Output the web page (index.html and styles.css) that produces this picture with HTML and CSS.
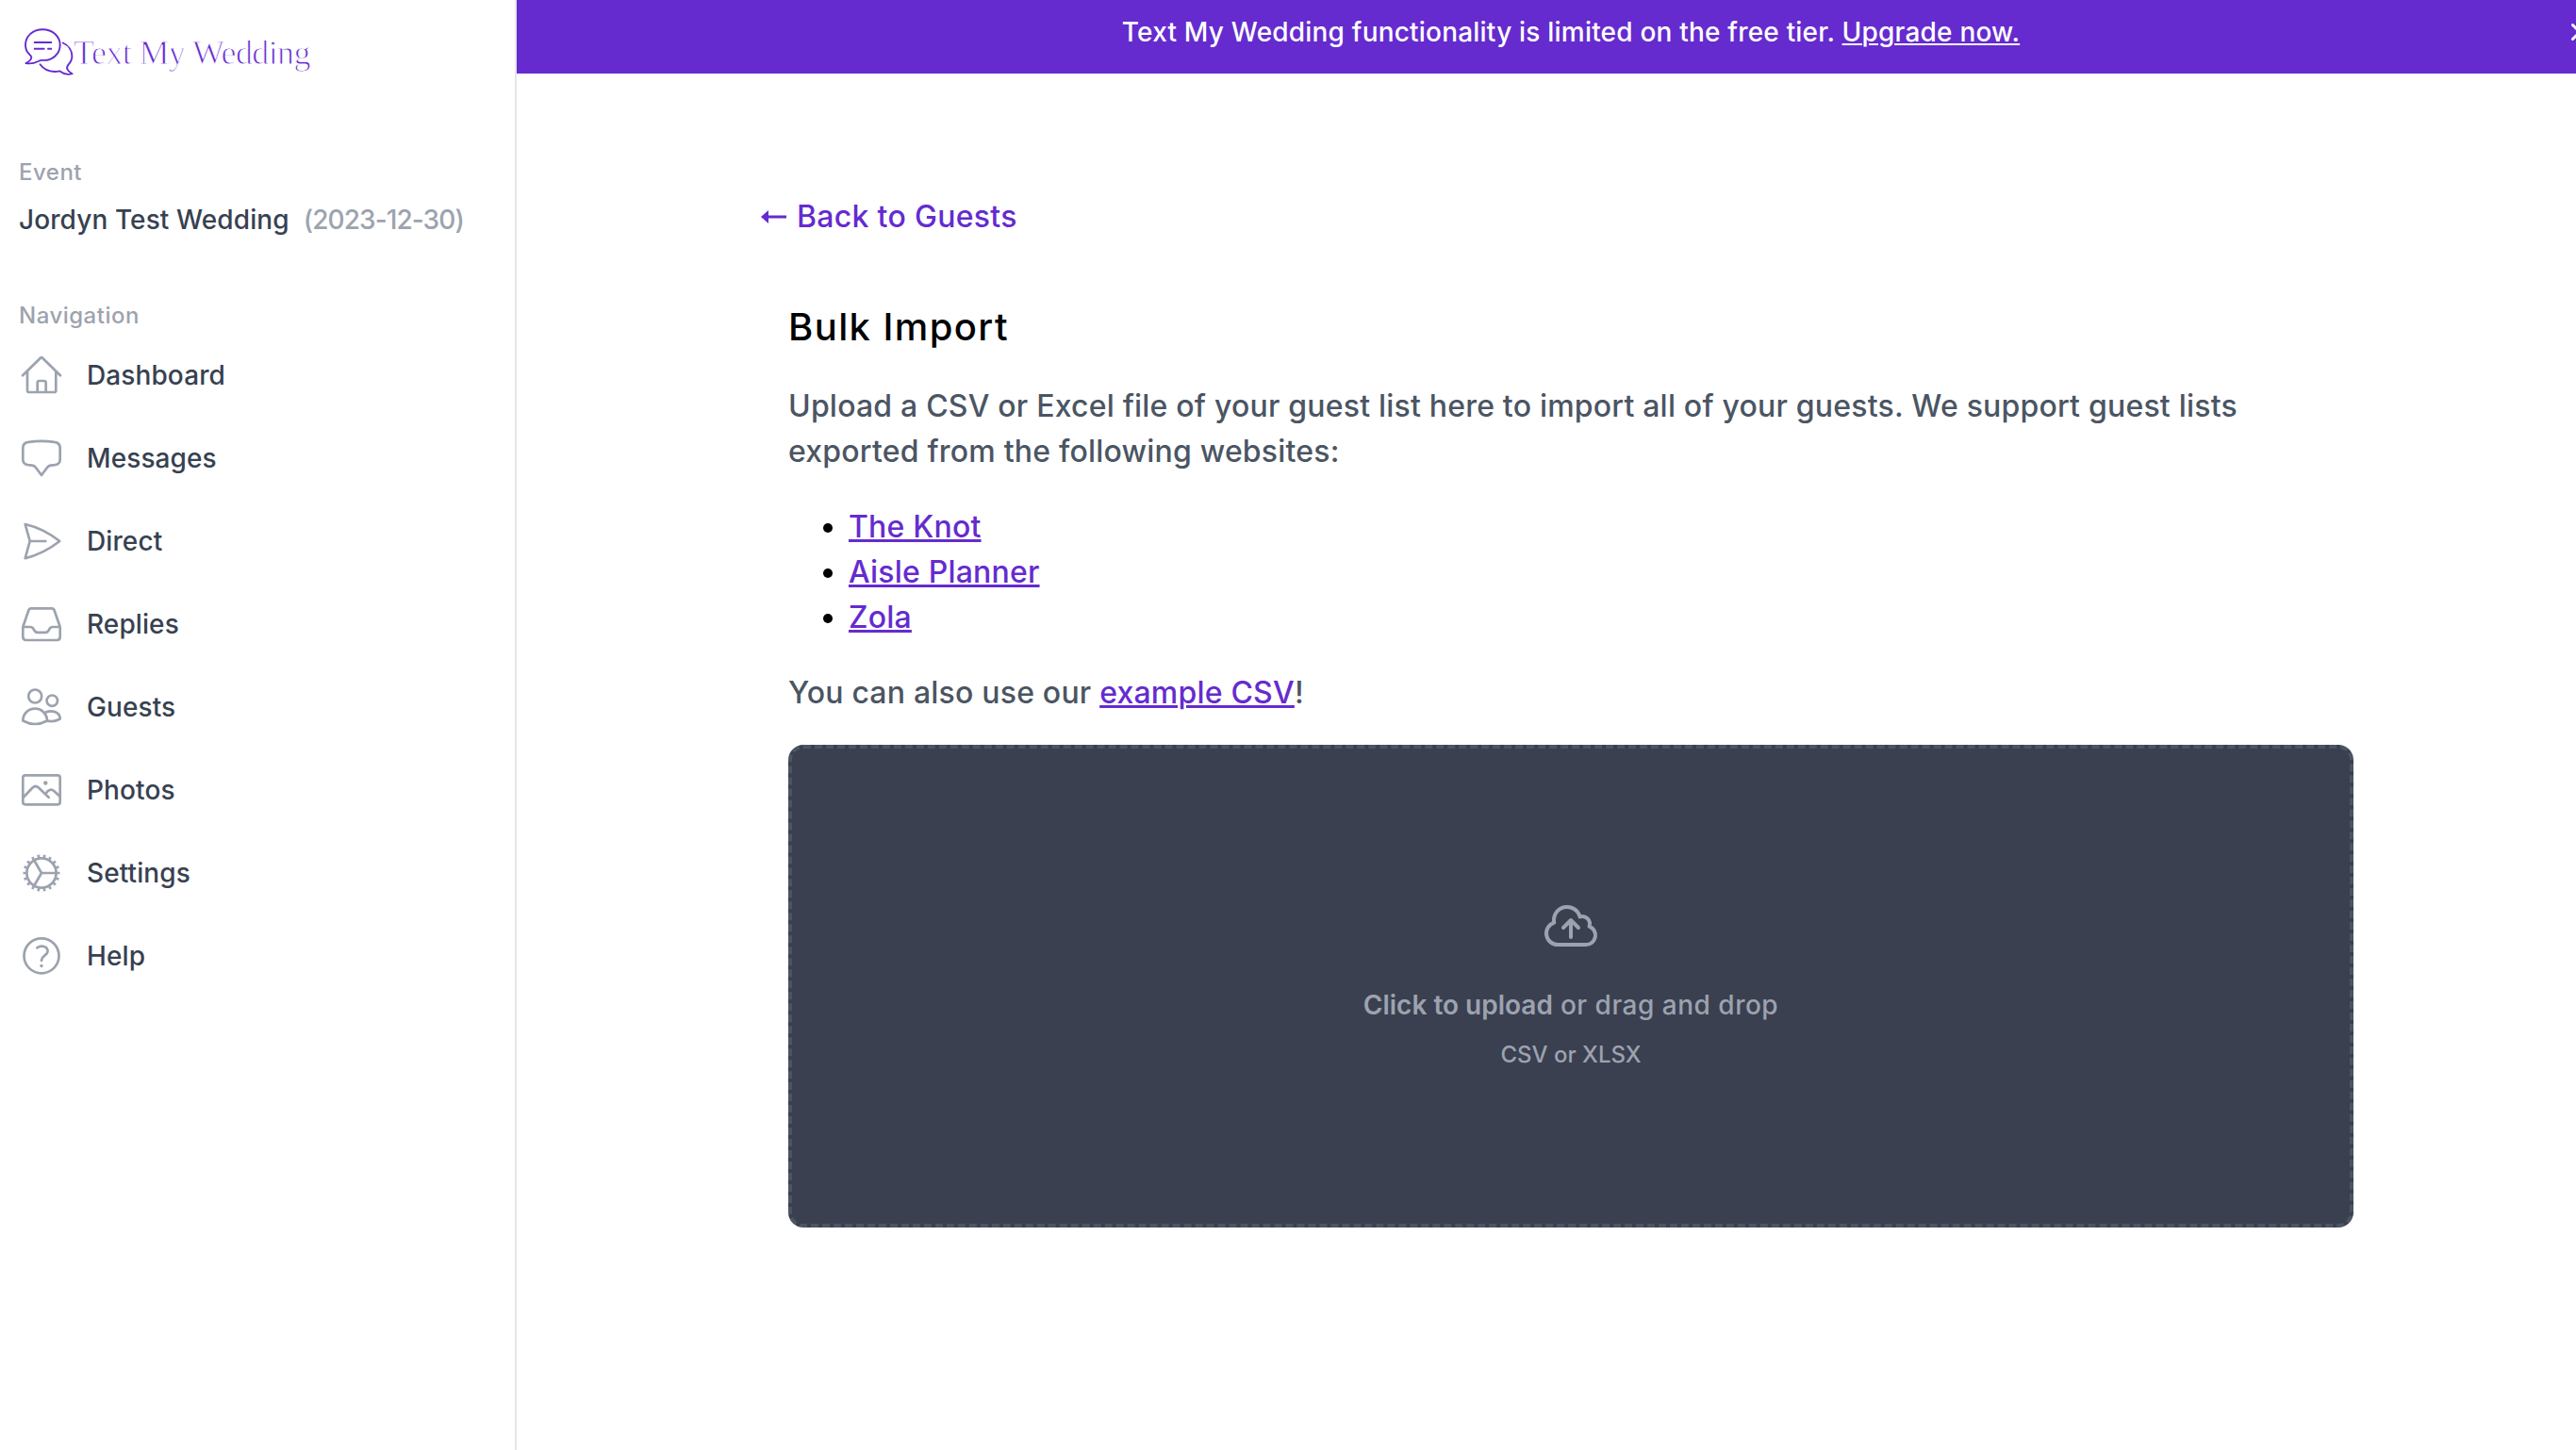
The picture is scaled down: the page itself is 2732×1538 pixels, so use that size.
FILE: index.html
```html
<!DOCTYPE html>
<html lang="en">
<head>
  <meta charset="UTF-8">
  <meta name="viewport" content="width=device-width, initial-scale=1">
  <title>Bulk Import - Text My Wedding</title>
  <link rel="stylesheet" href="styles.css">
</head>
<body>
  <aside class="sidebar">
    <a class="logo" href="#">
      <svg class="logo-icon" viewBox="0 0 52 52">
        <path d="M5.5 28C2.5 25.500 1 22 1 17.600C1 8.200 9 1.200 19.300 1.200S37.700 8.400 37.700 17.800S29.500 34.200 20.500 33.900Q17 33.600 14.500 35Q8 38.400 1.400 37Q7.500 34 7.300 30.600Q7 29 5.500 28Z"/>
        <path d="M40.7 15.5C46.5 18 50.4 23.5 50.4 29.5C50.4 34 48.5 36.5 46.2 39C43.5 42.5 46 45.5 50.6 48.2C46 49.8 41.5 48.5 37.5 45.4C29 47 21 44.5 16.5 38.3"/>
        <path d="M10.7 15H28.3M10.7 21.7H20.7M25 21.7H28.3"/>
      </svg>
      <span class="logo-text">Text My Wedding</span>
    </a>

    <div class="label">Event</div>
    <div class="event">
      <span class="event-name">Jordyn Test Wedding</span>
      <span class="event-date">(2023-12-30)</span>
    </div>

    <div class="label">Navigation</div>
    <nav class="nav">
      <a href="#">
        <svg viewBox="0 0 44 44"><path d="M2 22.3L20.9 3.7Q22 2.6 23.1 3.7L42 22.3M7 18V38.2Q7 40 8.8 40H35.5Q37.3 40 37.3 38.2V18M17.7 40V30Q17.7 28 19.7 28H24.7Q26.7 28 26.7 30V40"/></svg>
        Dashboard
      </a>
      <a href="#">
        <svg viewBox="0 0 44 44"><path d="M8.5 4.9Q22 2.7 35.5 4.9Q41.7 5.7 41.7 11V23.5Q41.7 28.5 36 29.2L32 29.6Q29.5 29.8 28 32L22 40L16 32Q14.5 29.8 12 29.6L8 29.2Q2.3 28.5 2.3 23.5V11Q2.3 5.7 8.5 4.9Z"/></svg>
        Messages
      </a>
      <a href="#">
        <svg viewBox="0 0 44 44"><path d="M4.7 4Q24 8.5 41.3 22Q24 35.5 4.7 40.2L9.7 22ZM9.7 22H26.3"/></svg>
        Direct
      </a>
      <a href="#">
        <svg viewBox="0 0 44 44"><path d="M11 5.3H33Q35 5.3 35.6 7.3L41.7 25V35.5Q41.7 39 38.2 39H5.8Q2.3 39 2.3 35.5V25L8.4 7.3Q9 5.3 11 5.3ZM2.3 25H10Q13 25 14 28Q15.2 30.8 18 30.8H26Q28.8 30.8 30 28Q31 25 34 25H41.7"/></svg>
        Replies
      </a>
      <a href="#">
        <svg viewBox="0 0 44 44">
          <circle cx="15.2" cy="10.5" r="7"/>
          <circle cx="33.3" cy="15.2" r="5.7"/>
          <path d="M2.3 36.5C2.3 29 8 23.7 15.2 23.7S28 29.5 28 36.5Q15.2 43.5 2.3 36.5ZM26.5 27.5C33.5 24.5 41.7 27.5 41.7 34.5Q36 38 28 36.7"/>
        </svg>
        Guests
      </a>
      <a href="#">
        <svg viewBox="0 0 44 44">
          <rect x="2.3" y="6.3" width="39.4" height="31" rx="2.5"/>
          <path d="M3 29.5L12.3 19.7Q15.5 16.5 18.7 19.3L29.7 29.7M26.5 26.5C28.5 21.5 32.5 20.5 35.5 23.2L41.5 28.7"/>
          <circle class="dot" cx="26.3" cy="14.5" r="2.2"/>
        </svg>
        Photos
      </a>
      <a href="#">
        <svg viewBox="0 0 44 44">
          <circle cx="22" cy="22" r="15.6"/>
          <circle class="teeth" cx="22" cy="22" r="17.8" pathLength="36"/>
          <path d="M22 22H37.6M22 22L14.2 8.5M22 22L14.2 35.5"/>
        </svg>
        Settings
      </a>
      <a href="#">
        <svg viewBox="0 0 44 44">
          <circle cx="22" cy="21.8" r="18.5"/>
          <path d="M17.3 13.3C22 9.8 28.6 12 28.6 17C28.6 21.5 22 21.5 22 27"/>
          <circle class="dot" cx="22" cy="32.5" r="1.7"/>
        </svg>
        Help
      </a>
    </nav>
  </aside>

  <main class="main">
    <div class="banner">
      <p>Text My Wedding functionality is limited on the free tier. <a href="#">Upgrade now.</a></p>
      <svg class="close" viewBox="0 0 18 18"><path d="M1.5 1.5L16.5 16.5M16.5 1.5L1.5 16.5"/></svg>
    </div>

    <div class="content">
      <a class="back" href="#">
        <svg viewBox="0 0 28 20"><path class="head" d="M0 10L8 3V17Z"/><path d="M5 10H27"/></svg>
        Back to Guests
      </a>

      <h1>Bulk Import</h1>
      <p>Upload a CSV or Excel file of your guest list here to import all of your guests. We support guest lists exported from the following websites:</p>
      <ul>
        <li><a href="#">The Knot</a></li>
        <li><a href="#">Aisle Planner</a></li>
        <li><a href="#">Zola</a></li>
      </ul>
      <p>You can also use our <a href="#">example CSV</a>!</p>

      <label class="dropzone">
        <svg viewBox="0 0 24 24"><path d="M12 16.5V9.75m0 0l3 3m-3-3l-3 3M6.75 19.5a4.5 4.5 0 01-1.41-8.775 5.25 5.25 0 0110.233-2.33 3 3 0 013.758 3.848A3.752 3.752 0 0118 19.5H6.75z"/></svg>
        <span class="hint"><b>Click to upload</b> or drag and drop</span>
        <span class="types">CSV or XLSX</span>
      </label>
    </div>
  </main>
</body>
</html>
```
FILE: styles.css
```css
* {
  box-sizing: border-box;
}

body {
  margin: 0;
  display: flex;
  height: 1538px;
  overflow: hidden;
  background: #fff;
  font-family: Inter, "Liberation Sans", sans-serif;
  font-weight: 500;
  font-size: 28px;
  line-height: 40px;
  letter-spacing: 0.1px;
}

h1, p, ul {
  margin: 0;
}

a {
  color: #652bcf;
}

svg {
  fill: none;
  stroke: currentColor;
  stroke-linecap: round;
  stroke-linejoin: round;
  flex-shrink: 0;
}

/* Sidebar */
.sidebar {
  flex: 0 0 548px;
  padding: 30px 20px 0;
  border-right: 2px solid #e5e7eb;
}

.logo {
  display: flex;
  align-items: center;
  margin: 0 0 85px 6px;
  text-decoration: none;
}

.logo-icon {
  width: 52px;
  height: 52px;
  stroke-width: 1.9;
}

.logo-text {
  font-family: "Liberation Serif", serif;
  font-weight: 400;
  font-size: 36px;
  line-height: 44px;
  letter-spacing: -0.6px;
  white-space: nowrap;
  /* thins the letters down */
  -webkit-text-stroke: 1px #fff;
}

.label {
  font-size: 24px;
  line-height: 32px;
  letter-spacing: 0.5px;
  color: #9ca3af;
}

.event {
  display: flex;
  gap: 15px;
  margin: 14px 0 66px;
  white-space: nowrap;
}

.event-name {
  color: #374151;
}

.event-date {
  color: #9ca3af;
  letter-spacing: -0.9px;
}

.nav {
  margin-top: 3px;
}

.nav a {
  display: flex;
  align-items: center;
  gap: 26px;
  height: 88px;
  padding-left: 2px;
  color: #374151;
  text-decoration: none;
}

.nav svg {
  width: 44px;
  height: 44px;
  stroke: #9ca3af;
  stroke-width: 2.7;
}

.nav .dot {
  fill: #9ca3af;
  stroke: none;
}

.nav .teeth {
  stroke-width: 3.4;
  stroke-linecap: butt;
  stroke-dasharray: 0.85 1.15;
  stroke-dashoffset: 0.425;
}

/* Main column runs past the right edge of the window */
.main {
  flex: 0 0 2236px;
}

.banner {
  display: grid;
  grid-template-columns: 1fr auto 1fr;
  height: 78px;
  padding: 14px 39px 0;
  background: #652bcf;
  color: #fff;
  letter-spacing: 0.2px;
}

.banner p {
  grid-column: 2;
}

.banner a {
  color: #fff;
  text-decoration-thickness: 2px;
  text-underline-offset: 2px;
}

.close {
  justify-self: end;
  width: 18px;
  height: 18px;
  margin-top: 11px;
  stroke-width: 3;
}

.content {
  width: 1660px;
  margin: 0 auto;
  padding-top: 128px;
  font-size: 32px;
  line-height: 48px;
  letter-spacing: 0.2px;
  color: #4b5563;
}

.content a {
  text-decoration-thickness: 3px;
  text-underline-offset: 2px;
}

.content .back {
  display: flex;
  align-items: center;
  gap: 10px;
  margin-left: -29px;
  letter-spacing: 0.3px;
  text-decoration: none;
}

.back svg {
  width: 28px;
  height: 20px;
  stroke-width: 3;
  stroke-linecap: butt;
}

.back .head {
  fill: currentColor;
  stroke: none;
}

h1 {
  margin-top: 65px;
  font-size: 40px;
  font-weight: 500;
  line-height: 56px;
  letter-spacing: 1.4px;
  color: #000;
}

.content p {
  margin-top: 32px;
}

ul {
  margin-top: 32px;
  padding-left: 64px;
}

li::marker {
  color: #000;
}

.dropzone {
  display: flex;
  flex-direction: column;
  align-items: center;
  justify-content: center;
  height: 512px;
  margin-top: 31px;
  padding-bottom: 7px;
  border: 4px dashed #4b5563;
  border-radius: 16px;
  background: #3a4050;
  color: #9ca3af;
}

.dropzone svg {
  width: 64px;
  height: 64px;
  stroke-width: 1.5;
}

.hint {
  margin: 32px 0 17px;
  font-size: 28px;
  line-height: 40px;
  letter-spacing: 0.5px;
}

.hint b {
  font-weight: 600;
  letter-spacing: 0;
}

.types {
  font-size: 24px;
  line-height: 32px;
  letter-spacing: 0;
}
```
